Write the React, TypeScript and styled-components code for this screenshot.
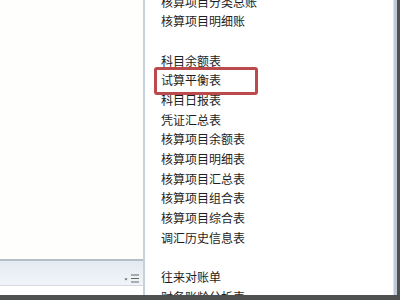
import React from "react";
import styled, { createGlobalStyle } from "styled-components";

const Global = createGlobalStyle`
  html, body { margin: 0; padding: 0; overflow: hidden; background: #ffffff; }
  * { box-sizing: border-box; }
`;

const Screen = styled.div`
  width: 400px;
  height: 300px;
  display: flex;
  flex-direction: column;
  overflow: hidden;
  font-family: "Noto Sans CJK SC", "Noto Sans", sans-serif;
`;

const Main = styled.div`
  flex: 1;
  display: flex;
  min-height: 0;
`;

const LeftPane = styled.div`
  width: 143px;
  display: flex;
  flex-direction: column;
  background: #fefefd;
`;

const LeftContent = styled.div`
  flex: 1;
`;

const Footer = styled.div`
  height: 27px;
  border-top: 2px solid #b6bec8;
  border-bottom: 1px solid #d3dae2;
  background: linear-gradient(#e3eaf2, #f1f5f9);
  display: flex;
  align-items: flex-end;
  justify-content: flex-end;
  padding: 0 3px 2px 0;
`;

const FooterGap = styled.div`
  height: 9px;
  background: #ffffff;
`;

const Divider = styled.div`
  width: 2px;
  background: #c6d1dc;
`;

const MenuPane = styled.div`
  position: relative;
  width: 248px;
  background: #ffffff;
  overflow: hidden;
  padding-left: 16px;
`;

const List = styled.ul`
  list-style: none;
  margin: -8.5px 0 0 0;
  padding: 0;
`;

const Item = styled.li<{ $blank?: boolean }>`
  height: 19.7px;
  line-height: 19.7px;
  font-size: 12px;
  color: #1e1e1e;
  white-space: nowrap;
`;

const Highlight = styled.div`
  position: absolute;
  left: 9px;
  top: 67px;
  width: 104px;
  height: 28px;
  border: 3px solid #bb4a4a;
  border-radius: 3px;
  pointer-events: none;
`;

const RightEdge = styled.div`
  width: 4px;
  background: #bfcad8;
  border-left: 1px solid #dce4ed;
`;

const DarkEdge = styled.div`
  width: 3px;
  background: #515253;
`;

const BottomBar = styled.div`
  height: 5px;
  background: #4f5050;
`;

const items: string[] = [
  "核算项目分类总账",
  "核算项目明细账",
  "",
  "科目余额表",
  "试算平衡表",
  "科目日报表",
  "凭证汇总表",
  "核算项目余额表",
  "核算项目明细表",
  "核算项目汇总表",
  "核算项目组合表",
  "核算项目综合表",
  "调汇历史信息表",
  "",
  "往来对账单",
  "财务账龄分析表",
];

const MenuIcon = () => (
  <svg width="16" height="9" viewBox="0 0 16 9">
    <path d="M0.5 4.5 L3.5 4.5 L2 6.5 Z" fill="#555" />
    <rect x="7" y="0.5" width="8" height="1" fill="#666" />
    <rect x="7" y="4" width="8" height="1" fill="#666" />
    <rect x="7" y="7.5" width="8" height="1" fill="#666" />
  </svg>
);

export default function App() {
  return (
    <Screen>
      <Global />
      <Main>
        <LeftPane>
          <LeftContent />
          <Footer>
            <MenuIcon />
          </Footer>
          <FooterGap />
        </LeftPane>
        <Divider />
        <MenuPane>
          <List>
            {items.map((t, i) => (
              <Item key={i} $blank={t === ""}>
                {t}
              </Item>
            ))}
          </List>
          <Highlight />
        </MenuPane>
        <RightEdge />
        <DarkEdge />
      </Main>
      <BottomBar />
    </Screen>
  );
}
